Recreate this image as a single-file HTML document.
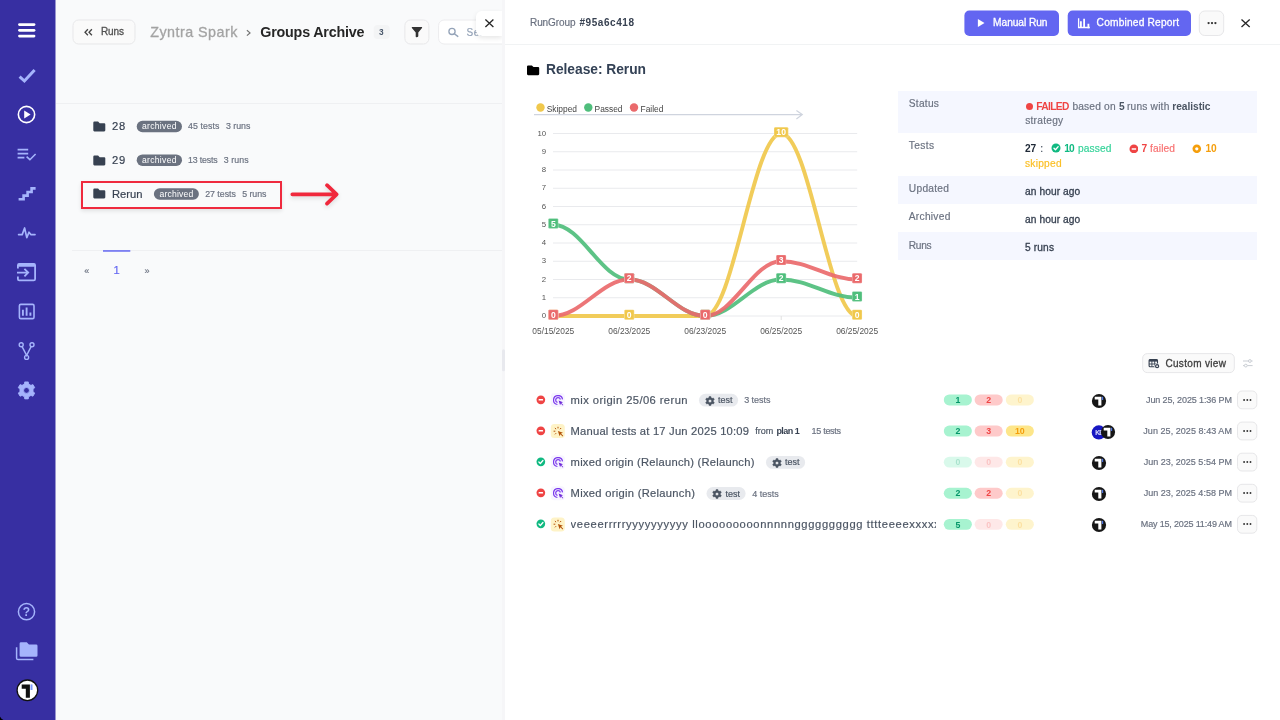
<!DOCTYPE html>
<html lang="en"><head><meta charset="utf-8"><title>Groups Archive</title>
<style>
html,body{margin:0;padding:0}
body{width:1280px;height:720px;overflow:hidden;position:relative;background:#f9fafb;font-family:"Liberation Sans", Arial, sans-serif;-webkit-font-smoothing:antialiased;}
.root{position:absolute;left:0;top:0;width:1280px;height:720px;will-change:transform}
.abs,.t{position:absolute}
.t{white-space:nowrap;line-height:1;margin:0;padding:0;display:block;-webkit-text-stroke:0.18px}
h1.t,h2.t{font-weight:700}
ul,li{margin:0;padding:0;list-style:none}
.sidebar{position:absolute;left:0;top:0;width:55px;height:720px;background:#372fa2}
.hline{position:absolute;height:1px;background:#eff0f2}
.btn{background:#fafafa;border:1px solid #e7e7e9;box-sizing:border-box;display:block}
.pbtn{background:#6366f1;border-radius:5px;display:block}
.hl{border:2px solid #ef2a3e;box-sizing:border-box;box-shadow:0 2px 4px rgba(0,0,0,.10)}
.panel{left:504.8px;top:0;width:776px;height:720px;background:#fff}
</style></head>
<body>
<div class="root">
<nav class="sidebar">
<svg class="abs" style="left:0;top:0" width="56" height="720" viewBox="0 0 56 720">
<rect x="18.1" y="23.2" width="17.3" height="2.7" rx="1.35" fill="#fff"/>
<rect x="18.1" y="29.0" width="17.3" height="2.7" rx="1.35" fill="#fff"/>
<rect x="18.1" y="34.7" width="17.3" height="2.7" rx="1.35" fill="#fff"/>
<path d="M19.6,76.6 L24.4,81 L34.6,70" fill="none" stroke="#a5b4fc" stroke-width="3"/>
<circle cx="26.5" cy="114.5" r="8.15" fill="none" stroke="#fff" stroke-width="1.6"/>
<path d="M24.2,110.4 L24.2,118.6 L30.6,114.5Z" fill="#fff"/>
<path d="M17.6,149.6 h10.6 M17.6,153.6 h10.6 M17.6,157.6 h6.8" stroke="#a5b4fc" stroke-width="1.6" fill="none"/>
<path d="M26.6,156.6 L29.9,159.7 L35.6,154" stroke="#a5b4fc" stroke-width="1.6" fill="none"/>
<path d="M18.6,199.2 h5 v-3.6 h4 v-3.6 h4 v-3.6 h4" stroke="#a5b4fc" stroke-width="2.6" fill="none"/>
<path d="M18.6,234.6 h3.6 l2.4,-6.6 l2.2,9.6 l2.2,-5.4 l1.8,2.4 h4.2" stroke="#a5b4fc" stroke-width="1.7" fill="none" stroke-linejoin="round" stroke-linecap="round"/>
<path d="M17.9,268.4 v-3.2 q0,-1.4 1.4,-1.4 h14.4 q1.4,0 1.4,1.4 v13.8 q0,1.4 -1.4,1.4 h-14.4 q-1.4,0 -1.4,-1.4 v-2.6" stroke="#a5b4fc" stroke-width="1.8" fill="none"/>
<rect x="17.9" y="263.4" width="17.2" height="3.4" rx="1" fill="#a5b4fc"/>
<path d="M17,272.6 h10.6 M24.4,268.8 l3.8,3.8 l-3.8,3.8" stroke="#a5b4fc" stroke-width="1.8" fill="none"/>
<rect x="19.4" y="304.4" width="14.6" height="14.2" rx="1.4" stroke="#a5b4fc" stroke-width="1.6" fill="none"/>
<path d="M22.9,309.8 v6 M26.6,307.4 v8.4 M30.4,312.6 v3.2" stroke="#a5b4fc" stroke-width="1.9" fill="none"/>
<g stroke="#a5b4fc" stroke-width="1.4" fill="none"><circle cx="21.2" cy="344.7" r="2"/><circle cx="32" cy="344.7" r="2"/><circle cx="26.6" cy="357.4" r="2"/><path d="M22.1,346.6 L26.6,355.4 L31.1,346.6"/></g>
<path d="M24.36,384.05 L24.69,381.89 L28.31,381.89 L28.64,384.05 L30.93,385.37 L32.97,384.58 L34.77,387.71 L33.07,389.08 L33.07,391.72 L34.77,393.09 L32.97,396.22 L30.93,395.43 L28.64,396.75 L28.31,398.91 L24.69,398.91 L24.36,396.75 L22.07,395.43 L20.03,396.22 L18.23,393.09 L19.93,391.72 L19.93,389.08 L18.23,387.71 L20.03,384.58 L22.07,385.37Z M23.60,390.40 a2.9,2.9 0 1,0 5.8,0 a2.9,2.9 0 1,0 -5.8,0Z" fill="#a5b4fc" fill-rule="evenodd" stroke="#a5b4fc" stroke-width="0.8" stroke-linejoin="round"/>
<circle cx="26.5" cy="611.7" r="8.1" fill="none" stroke="#a5b4fc" stroke-width="1.5"/>
<text x="26.5" y="616" font-family='"Liberation Sans", Arial, sans-serif' font-size="12" font-weight="700" fill="#a5b4fc" text-anchor="middle">?</text>
<path d="M16.6,647.2 v11 q0,1.4 1.4,1.4 h15.4" stroke="#a5b4fc" stroke-width="1.5" fill="none"/>
<path d="M21.00,642.20 h5.76 l2.20,2.20 h7.14 q1.4,0 1.4,1.4 v9.60 q0,1.4 -1.4,1.4 h-15.10 q-1.4,0 -1.4,-1.4 v-11.80 q0,-1.4 1.4,-1.4z" fill="#a5b4fc"/>
<circle cx="27.4" cy="690.3" r="10.3" fill="#fff" stroke="#111" stroke-width="1.3"/>
<path d="M21.7,684.4 h8.2 v13.4 h-4.1 v-9.1 h-4.1z" fill="#111"/>
<path d="M30.5,684.4 h2 v5.6 h-2z" fill="#7d9bff"/>
</svg>
<div class="abs" style="left:0;top:715px;width:5px;height:5px;background:radial-gradient(circle at 100% 0,rgba(0,0,0,0) 4.7px,#000 5.4px)"></div>
<div class="abs" style="left:55px;top:0;width:1px;height:720px;background:#9a96d0"></div>
</nav>
<main class="left">
<div class="hline" style="left:56px;top:102.6px;width:447px"></div>
<svg class="abs" style="left:70px;top:17px;" width="69" height="31" viewBox="70 17 69 31"><rect x="73.00" y="20.00" width="62.00" height="24.00" rx="5.50" fill="#fafafa" stroke="#e7e7e9" stroke-width="1"/></svg>
<svg class="abs" style="left:82px;top:26px" width="14" height="12" viewBox="82 26 14 12"><path d="M87.9,29.2 L85,32.2 L87.9,35.2 M91.9,29.2 L89,32.2 L91.9,35.2" fill="none" stroke="#444" stroke-width="1.3"/></svg>
<span id="t1" class="t" style="left:101.00px;top:27.00px;font-size:10px;color:#525252;font-weight:400;letter-spacing:-0.120px;-webkit-text-stroke:0.3px;">Runs</span>
<span id="t2" class="t" style="left:150.20px;top:25.00px;font-size:14.3px;color:#a3a3a3;font-weight:400;letter-spacing:0.478px;-webkit-text-stroke:0.3px;">Zyntra Spark</span>
<svg class="abs" style="left:244px;top:28px" width="10" height="10" viewBox="244 28 10 10"><path d="M246.9,30.2 L250,32.9 L246.9,35.6" fill="none" stroke="#737373" stroke-width="1.2"/></svg>
<h1 id="t3" class="t" style="left:260.20px;top:25.00px;font-size:14.3px;color:#262626;font-weight:700;letter-spacing:-0.180px;-webkit-text-stroke:0;">Groups Archive</h1>
<svg class="abs" style="left:371px;top:23px;" width="22" height="20" viewBox="371 23 22 20"><rect x="373.70" y="25.00" width="16.00" height="14.00" rx="4.00" fill="#f3f4f5"/></svg>
<span id="t4" class="t" style="left:379.10px;top:28.00px;font-size:8.3px;color:#475569;font-weight:700;letter-spacing:0.000px;-webkit-text-stroke:0;">3</span>
<svg class="abs" style="left:402px;top:17px;" width="31" height="31" viewBox="402 17 31 31"><rect x="404.90" y="20.00" width="24.00" height="24.00" rx="5.50" fill="#fafafa" stroke="#e7e7e9" stroke-width="1"/></svg>
<svg class="abs" style="left:410px;top:25px" width="14" height="14" viewBox="410 25 14 14"><path d="M412,26.9 h9.9 q0.6,0.4 0.1,1.1 l-3.7,4.6 v3.4 q0,0.6 -0.6,0.9 l-1.2,0.4 q-0.8,0.1 -0.8,-0.7 v-4 l-3.8,-4.6 q-0.4,-0.7 0.1,-1.1z" fill="#333"/></svg>
<div class="abs" style="left:430px;top:10px;width:72px;height:40px;overflow:hidden"><svg class="abs" style="left:6px;top:7px;" width="86" height="31" viewBox="436 17 86 31"><rect x="438.60" y="20.00" width="79.00" height="24.00" rx="5.50" fill="#fff" stroke="#ececee" stroke-width="1"/></svg></div>
<svg class="abs" style="left:446px;top:26px" width="14" height="12" viewBox="446 26 14 12"><circle cx="452" cy="31.4" r="3.1" fill="none" stroke="#94a3b8" stroke-width="1.3"/><path d="M454.3,33.8 L457.8,36.4" stroke="#94a3b8" stroke-width="1.4" stroke-linecap="round"/></svg>
<span id="t5" class="t" style="left:466.50px;top:28.00px;font-size:10px;color:#94a3b8;font-weight:400;letter-spacing:0.000px;letter-spacing:0.5px;">Search</span>
<ul class="list">
<li><svg class="abs" style="left:93px;top:121px" width="13" height="11" viewBox="0 0 13 11"><path d="M1.40,0.60 h3.70 l1.60,1.60 h4.50 q1.1,0 1.1,1.1 v6.00 q0,1.1 -1.1,1.1 h-9.80 q-1.1,0 -1.1,-1.1 v-7.60 q0,-1.1 1.1,-1.1z" fill="#374151"/></svg><span id="t6" class="t" style="left:112.00px;top:121.00px;font-size:11.2px;color:#374151;font-weight:400;letter-spacing:0.747px;">28</span><svg class="abs" style="left:134px;top:118px;" width="52" height="18" viewBox="134 118 52 18"><rect x="136.70" y="120.70" width="45.30" height="11.50" rx="5.75" fill="#6b7280"/></svg><span id="t7" class="t" style="left:142.00px;top:122.00px;font-size:8.6px;color:#fff;font-weight:400;letter-spacing:0.288px;-webkit-text-stroke:0;">archived</span><span id="t8" class="t" style="left:188.00px;top:122.00px;font-size:8.8px;color:#6b7280;font-weight:400;letter-spacing:0.084px;">45 tests</span><span id="t9" class="t" style="left:225.90px;top:122.00px;font-size:8.8px;color:#6b7280;font-weight:400;letter-spacing:0.009px;">3 runs</span></li>
<li><svg class="abs" style="left:93px;top:154.7px" width="13" height="11" viewBox="0 0 13 11"><path d="M1.40,0.60 h3.70 l1.60,1.60 h4.50 q1.1,0 1.1,1.1 v6.00 q0,1.1 -1.1,1.1 h-9.80 q-1.1,0 -1.1,-1.1 v-7.60 q0,-1.1 1.1,-1.1z" fill="#374151"/></svg><span id="t10" class="t" style="left:112.00px;top:155.00px;font-size:11.2px;color:#374151;font-weight:400;letter-spacing:0.747px;">29</span><svg class="abs" style="left:134px;top:152px;" width="52" height="18" viewBox="134 152 52 18"><rect x="136.70" y="154.40" width="45.30" height="11.50" rx="5.75" fill="#6b7280"/></svg><span id="t11" class="t" style="left:142.00px;top:156.00px;font-size:8.6px;color:#fff;font-weight:400;letter-spacing:0.288px;-webkit-text-stroke:0;">archived</span><span id="t12" class="t" style="left:188.00px;top:156.00px;font-size:8.8px;color:#6b7280;font-weight:400;letter-spacing:-0.173px;">13 tests</span><span id="t13" class="t" style="left:223.80px;top:156.00px;font-size:8.8px;color:#6b7280;font-weight:400;letter-spacing:0.069px;">3 runs</span></li>
<li><div class="abs hl" style="left:81px;top:181px;width:201px;height:28px"></div><svg class="abs" style="left:93px;top:188.4px" width="13" height="11" viewBox="0 0 13 11"><path d="M1.40,0.60 h3.70 l1.60,1.60 h4.50 q1.1,0 1.1,1.1 v6.00 q0,1.1 -1.1,1.1 h-9.80 q-1.1,0 -1.1,-1.1 v-7.60 q0,-1.1 1.1,-1.1z" fill="#374151"/></svg><span id="t14" class="t" style="left:112.00px;top:189.00px;font-size:11.2px;color:#374151;font-weight:400;letter-spacing:-0.021px;">Rerun</span><svg class="abs" style="left:151px;top:186px;" width="51" height="18" viewBox="151 186 51 18"><rect x="153.90" y="188.20" width="45.00" height="11.50" rx="5.75" fill="#6b7280"/></svg><span id="t15" class="t" style="left:159.60px;top:190.00px;font-size:8.6px;color:#fff;font-weight:400;letter-spacing:0.174px;-webkit-text-stroke:0;">archived</span><span id="t16" class="t" style="left:205.20px;top:190.00px;font-size:8.8px;color:#6b7280;font-weight:400;letter-spacing:-0.016px;">27 tests</span><span id="t17" class="t" style="left:242.30px;top:190.00px;font-size:8.8px;color:#6b7280;font-weight:400;letter-spacing:-0.071px;">5 runs</span></li>
</ul>
<svg class="abs" style="left:285px;top:178px;filter:drop-shadow(0 2px 2px rgba(0,0,0,.12))" width="60" height="32" viewBox="285 178 60 32"><path d="M292.3,194.3 H336.5 M327,185.2 L336.6,194.3 L327,203.6" fill="none" stroke="#f0283c" stroke-width="3.7" stroke-linecap="round" stroke-linejoin="round"/></svg>
<div class="hline" style="left:72px;top:250.2px;width:431px"></div>
<svg class="abs" style="left:101px;top:248px;" width="34" height="8" viewBox="101 248 34 8"><rect x="103.00" y="250.20" width="27.30" height="1.50" rx="0.00" fill="#6366f1"/></svg>
<span id="t18" class="t" style="left:84.20px;top:267.00px;font-size:9px;color:#6b7280;font-weight:400;letter-spacing:0.000px;">«</span><span id="t19" class="t" style="left:113.60px;top:265.00px;font-size:11.2px;color:#6366f1;font-weight:400;letter-spacing:0.000px;">1</span><span id="t20" class="t" style="left:144.60px;top:267.00px;font-size:9px;color:#6b7280;font-weight:400;letter-spacing:0.000px;">»</span>
<div class="abs" style="left:476.2px;top:10.6px;width:25.8px;height:25.3px;border-radius:6px 0 0 6px;background:#fff;box-shadow:0 2px 5px rgba(0,0,0,.10)"></div>
<svg class="abs" style="left:483px;top:17px" width="13" height="13" viewBox="483 17 13 13"><path d="M485.4,19.5 L493.4,26.9 M493.4,19.5 L485.4,26.9" stroke="#262626" stroke-width="1.3"/></svg>
</main>
<section class="right">
<div class="abs panel"></div>
<div class="abs" style="left:501.8px;top:0;width:3.2px;height:720px;background:#f6f6f8"></div>
<svg class="abs" style="left:500px;top:347px;" width="9" height="28" viewBox="500 347 9 28"><rect x="502.00" y="349.20" width="3.00" height="22.00" rx="1.50" fill="#e8e9ee"/></svg>
<div class="hline" style="left:505px;top:43.6px;width:775px;background:#f1f3f4"></div>
<span id="t21" class="t" style="left:530.00px;top:18.00px;font-size:10px;color:#6b7280;font-weight:400;letter-spacing:-0.092px;">RunGroup</span><span id="t22" class="t" style="left:579.50px;top:18.00px;font-size:10px;color:#374151;font-weight:700;letter-spacing:0.555px;-webkit-text-stroke:0;">#95a6c418</span>
<svg class="abs" style="left:962px;top:8px;" width="101" height="32" viewBox="962 8 101 32"><rect x="964.40" y="10.60" width="94.60" height="25.40" rx="5.00" fill="#6366f1"/></svg>
<svg class="abs" style="left:976px;top:18px" width="10" height="10" viewBox="976 18 10 10"><path d="M977.9,19 L984.5,23 L977.9,27Z" fill="#fff"/></svg>
<span id="t23" class="t" style="left:993.10px;top:18.00px;font-size:10.2px;color:#fff;font-weight:400;letter-spacing:-0.060px;-webkit-text-stroke:0.3px;">Manual Run</span>
<svg class="abs" style="left:1065px;top:8px;" width="130" height="32" viewBox="1065 8 130 32"><rect x="1067.70" y="10.60" width="123.30" height="25.40" rx="5.00" fill="#6366f1"/></svg>
<svg class="abs" style="left:1077px;top:17px" width="14" height="12" viewBox="1077 17 14 12"><path d="M1078.6,18.2 v9.3 h11.2" stroke="#fff" stroke-width="1.3" fill="none"/><path d="M1080.9,21.3 v5.6 M1084.1,18.8 v8.1 M1088.4,23.8 v4.4" stroke="#fff" stroke-width="1.8" fill="none"/></svg>
<span id="t24" class="t" style="left:1096.60px;top:18.00px;font-size:10.2px;color:#fff;font-weight:400;letter-spacing:0.183px;-webkit-text-stroke:0.3px;">Combined Report</span>
<svg class="abs" style="left:1196px;top:8px;" width="32" height="32" viewBox="1196 8 32 32"><rect x="1199.30" y="11.00" width="24.40" height="24.50" rx="5.50" fill="#fafafa" stroke="#e7e7e9" stroke-width="1"/></svg>
<svg class="abs" style="left:1206px;top:21px" width="12" height="4" viewBox="1206 21 12 4"><circle cx="1208.6" cy="23.1" r="1.15" fill="#333"/><circle cx="1212" cy="23.1" r="1.15" fill="#333"/><circle cx="1215.4" cy="23.1" r="1.15" fill="#333"/></svg>
<svg class="abs" style="left:1239px;top:17px" width="13" height="13" viewBox="1239 17 13 13"><path d="M1241.5,19.5 L1249.7,27.1 M1249.7,19.5 L1241.5,27.1" stroke="#262626" stroke-width="1.3"/></svg>
<svg class="abs" style="left:526px;top:64px" width="14" height="12" viewBox="0 0 14 12"><path d="M2.10,1.40 h3.78 l1.60,1.60 h4.62 q1.1,0 1.1,1.1 v6.00 q0,1.1 -1.1,1.1 h-10.00 q-1.1,0 -1.1,-1.1 v-7.60 q0,-1.1 1.1,-1.1z" fill="#000"/></svg>
<h2 id="t25" class="t" style="left:546.00px;top:63.00px;font-size:13.8px;color:#334155;font-weight:700;letter-spacing:-0.035px;-webkit-text-stroke:0;">Release: Rerun</h2>
<div class="abs" style="left:898px;top:91.3px;width:359.2px;height:41.8px;background:#f5f7ff"></div>
<div class="abs" style="left:898px;top:175.6px;width:359.2px;height:28.2px;background:#f5f7ff"></div>
<div class="abs" style="left:898px;top:232px;width:359.2px;height:28.1px;background:#f5f7ff"></div>
<span id="t26" class="t" style="left:908.80px;top:99.00px;font-size:10.2px;color:#6b7280;font-weight:400;letter-spacing:0.242px;">Status</span>
<span class="abs" style="left:1025.6px;top:102.6px;width:7.6px;height:7.6px;border-radius:50%;background:#ef4444"></span>
<span id="t27" class="t" style="left:1036.20px;top:102.00px;font-size:10.2px;color:#ef4444;font-weight:700;letter-spacing:-0.607px;-webkit-text-stroke:0;">FAILED</span><span id="t28" class="t" style="left:1072.40px;top:102.00px;font-size:10.2px;color:#6b7280;font-weight:400;letter-spacing:0.183px;">based on</span><span id="t29" class="t" style="left:1118.90px;top:102.00px;font-size:10.2px;color:#4b5563;font-weight:700;letter-spacing:0.000px;-webkit-text-stroke:0;">5</span><span id="t30" class="t" style="left:1127.00px;top:102.00px;font-size:10.2px;color:#6b7280;font-weight:400;letter-spacing:0.192px;">runs with</span><span id="t31" class="t" style="left:1172.30px;top:102.00px;font-size:10.2px;color:#4b5563;font-weight:700;letter-spacing:-0.039px;-webkit-text-stroke:0;">realistic</span><span id="t32" class="t" style="left:1025.20px;top:116.00px;font-size:10.2px;color:#6b7280;font-weight:400;letter-spacing:0.250px;">strategy</span>
<span id="t33" class="t" style="left:908.80px;top:141.00px;font-size:10.2px;color:#6b7280;font-weight:400;letter-spacing:0.355px;">Tests</span>
<span id="t34" class="t" style="left:1025.00px;top:144.00px;font-size:10.2px;color:#1f2937;font-weight:700;letter-spacing:-0.044px;-webkit-text-stroke:0;">27</span><span id="t35" class="t" style="left:1040.30px;top:144.00px;font-size:10.2px;color:#4b5563;font-weight:400;letter-spacing:0.000px;">:</span>
<svg class="abs" style="left:1050.50px;top:143.40px" width="10.00" height="10.00" viewBox="-5.0 -5.0 10.0 10.0"><circle r="4.5" fill="#10b981"/><path d="M-2.02,0.23 L-0.54,1.71 L2.16,-1.35" stroke="#fff" stroke-width="1.35" fill="none" stroke-linecap="round" stroke-linejoin="round"/></svg><span id="t36" class="t" style="left:1064.30px;top:144.00px;font-size:10.2px;color:#10b981;font-weight:700;letter-spacing:-0.844px;-webkit-text-stroke:0;">10</span><span id="t37" class="t" style="left:1077.90px;top:144.00px;font-size:10.2px;color:#34d399;font-weight:400;letter-spacing:0.128px;">passed</span>
<svg class="abs" style="left:1128.50px;top:143.50px" width="9.80" height="9.80" viewBox="-4.9 -4.9 9.8 9.8"><circle r="4.4" fill="#ef4444"/><rect x="-2.29" y="-0.75" width="4.58" height="1.50" rx="0.44" fill="#fff"/></svg><span id="t38" class="t" style="left:1141.50px;top:144.00px;font-size:10.2px;color:#ef4444;font-weight:700;letter-spacing:0.000px;-webkit-text-stroke:0;">7</span><span id="t39" class="t" style="left:1150.00px;top:144.00px;font-size:10.2px;color:#f87171;font-weight:400;letter-spacing:0.128px;">failed</span>
<svg class="abs" style="left:1192.40px;top:143.60px" width="9.60" height="9.60" viewBox="-4.8 -4.8 9.6 9.6"><circle r="4.3" fill="#f59e0b"/><circle r="1.63" fill="#fff"/></svg><span id="t40" class="t" style="left:1205.50px;top:144.00px;font-size:10.2px;color:#f59e0b;font-weight:700;letter-spacing:-0.244px;-webkit-text-stroke:0;">10</span><span id="t41" class="t" style="left:1025.00px;top:159.00px;font-size:10.2px;color:#fbbf24;font-weight:400;letter-spacing:0.246px;">skipped</span>
<span id="t42" class="t" style="left:908.80px;top:184.00px;font-size:10.2px;color:#6b7280;font-weight:400;letter-spacing:0.278px;">Updated</span><span id="t43" class="t" style="left:1025.00px;top:187.00px;font-size:10.2px;color:#374151;font-weight:400;letter-spacing:0.091px;-webkit-text-stroke:0.3px;">an hour ago</span>
<span id="t44" class="t" style="left:908.80px;top:212.00px;font-size:10.2px;color:#6b7280;font-weight:400;letter-spacing:0.266px;">Archived</span><span id="t45" class="t" style="left:1025.00px;top:215.00px;font-size:10.2px;color:#374151;font-weight:400;letter-spacing:0.091px;-webkit-text-stroke:0.3px;">an hour ago</span>
<span id="t46" class="t" style="left:908.80px;top:241.00px;font-size:10.2px;color:#6b7280;font-weight:400;letter-spacing:-0.332px;">Runs</span><span id="t47" class="t" style="left:1025.00px;top:243.00px;font-size:10.2px;color:#374151;font-weight:400;letter-spacing:0.134px;-webkit-text-stroke:0.3px;">5 runs</span>
<svg class="abs chart" style="left:520px;top:95px" width="375" height="250" viewBox="520 95 375 250" font-family='"Liberation Sans", Arial, sans-serif'>
<circle cx="540.5" cy="107.5" r="4.2" fill="#f0c84c"/><text x="546.7" y="111.8" font-size="8.4" fill="#444">Skipped</text>
<circle cx="588.3" cy="107.5" r="4.2" fill="#4fbe7c"/><text x="594.6" y="111.8" font-size="8.4" fill="#444">Passed</text>
<circle cx="634" cy="107.5" r="4.2" fill="#ea6a6c"/><text x="640.6" y="111.8" font-size="8.4" fill="#444">Failed</text>
<path d="M534,114.6 H802 M796.4,110.4 L802.3,114.6 L796.4,119" fill="none" stroke="#cfd4de" stroke-width="1.2"/>
<line x1="553" x2="857.2" y1="316.00" y2="316.00" stroke="#e9eaed" stroke-width="1"/>
<text x="546.2" y="318.00" font-size="7.8" fill="#555" text-anchor="end">0</text>
<line x1="553" x2="857.2" y1="297.75" y2="297.75" stroke="#e9eaed" stroke-width="1"/>
<text x="546.2" y="299.75" font-size="7.8" fill="#555" text-anchor="end">1</text>
<line x1="553" x2="857.2" y1="279.50" y2="279.50" stroke="#e9eaed" stroke-width="1"/>
<text x="546.2" y="281.50" font-size="7.8" fill="#555" text-anchor="end">2</text>
<line x1="553" x2="857.2" y1="261.25" y2="261.25" stroke="#e9eaed" stroke-width="1"/>
<text x="546.2" y="263.25" font-size="7.8" fill="#555" text-anchor="end">3</text>
<line x1="553" x2="857.2" y1="243.00" y2="243.00" stroke="#e9eaed" stroke-width="1"/>
<text x="546.2" y="245.00" font-size="7.8" fill="#555" text-anchor="end">4</text>
<line x1="553" x2="857.2" y1="224.75" y2="224.75" stroke="#e9eaed" stroke-width="1"/>
<text x="546.2" y="226.75" font-size="7.8" fill="#555" text-anchor="end">5</text>
<line x1="553" x2="857.2" y1="206.50" y2="206.50" stroke="#e9eaed" stroke-width="1"/>
<text x="546.2" y="208.50" font-size="7.8" fill="#555" text-anchor="end">6</text>
<line x1="553" x2="857.2" y1="188.25" y2="188.25" stroke="#e9eaed" stroke-width="1"/>
<text x="546.2" y="190.25" font-size="7.8" fill="#555" text-anchor="end">7</text>
<line x1="553" x2="857.2" y1="170.00" y2="170.00" stroke="#e9eaed" stroke-width="1"/>
<text x="546.2" y="172.00" font-size="7.8" fill="#555" text-anchor="end">8</text>
<line x1="553" x2="857.2" y1="151.75" y2="151.75" stroke="#e9eaed" stroke-width="1"/>
<text x="546.2" y="153.75" font-size="7.8" fill="#555" text-anchor="end">9</text>
<line x1="553" x2="857.2" y1="133.50" y2="133.50" stroke="#e9eaed" stroke-width="1"/>
<text x="546.2" y="135.50" font-size="7.8" fill="#555" text-anchor="end">10</text>
<line x1="781.2" x2="781.2" y1="316" y2="320" stroke="#e0e0e0" stroke-width="1"/>
<text x="553.30" y="333.9" font-size="8.4" fill="#555" text-anchor="middle">05/15/2025</text>
<text x="629.25" y="333.9" font-size="8.4" fill="#555" text-anchor="middle">06/23/2025</text>
<text x="705.20" y="333.9" font-size="8.4" fill="#555" text-anchor="middle">06/23/2025</text>
<text x="781.15" y="333.9" font-size="8.4" fill="#555" text-anchor="middle">06/25/2025</text>
<text x="857.10" y="333.9" font-size="8.4" fill="#555" text-anchor="middle">06/25/2025</text>
<path d="M553.30,316.00 C581.43,316.00 601.12,316.00 629.25,316.00 C657.38,316.00 677.07,316.00 705.20,316.00 C733.33,316.00 753.02,133.50 781.15,133.50 C809.28,133.50 828.97,316.00 857.10,316.00" fill="none" stroke="#f0c84c" stroke-width="3.9" stroke-linecap="butt" opacity="0.92"/>
<path d="M553.30,224.75 C581.43,224.75 601.12,279.50 629.25,279.50 C657.38,279.50 677.07,316.00 705.20,316.00 C733.33,316.00 753.02,279.50 781.15,279.50 C809.28,279.50 828.97,297.75 857.10,297.75" fill="none" stroke="#4fbe7c" stroke-width="3.9" stroke-linecap="butt" opacity="0.92"/>
<path d="M553.30,316.00 C581.43,316.00 601.12,279.50 629.25,279.50 C657.38,279.50 677.07,316.00 705.20,316.00 C733.33,316.00 753.02,261.25 781.15,261.25 C809.28,261.25 828.97,279.50 857.10,279.50" fill="none" stroke="#ea6a6c" stroke-width="3.9" stroke-linecap="butt" opacity="0.92"/>
<rect x="548.35" y="309.65" width="9.9" height="10.1" rx="1.2" fill="#fff"/><rect x="548.35" y="309.65" width="9.9" height="10.1" rx="1.2" fill="#f0c84c" fill-opacity="0.8"/><rect x="549.05" y="310.35" width="8.5" height="8.7" rx="0.8" fill="#f0c84c"/><text x="553.30" y="317.80" font-size="8.6" font-weight="700" fill="#fff" text-anchor="middle">0</text>
<rect x="624.30" y="309.65" width="9.9" height="10.1" rx="1.2" fill="#fff"/><rect x="624.30" y="309.65" width="9.9" height="10.1" rx="1.2" fill="#f0c84c" fill-opacity="0.8"/><rect x="625.00" y="310.35" width="8.5" height="8.7" rx="0.8" fill="#f0c84c"/><text x="629.25" y="317.80" font-size="8.6" font-weight="700" fill="#fff" text-anchor="middle">0</text>
<rect x="700.25" y="309.65" width="9.9" height="10.1" rx="1.2" fill="#fff"/><rect x="700.25" y="309.65" width="9.9" height="10.1" rx="1.2" fill="#f0c84c" fill-opacity="0.8"/><rect x="700.95" y="310.35" width="8.5" height="8.7" rx="0.8" fill="#f0c84c"/><text x="705.20" y="317.80" font-size="8.6" font-weight="700" fill="#fff" text-anchor="middle">0</text>
<rect x="774.00" y="127.15" width="14.3" height="10.1" rx="1.2" fill="#fff"/><rect x="774.00" y="127.15" width="14.3" height="10.1" rx="1.2" fill="#f0c84c" fill-opacity="0.8"/><rect x="774.70" y="127.85" width="12.9" height="8.7" rx="0.8" fill="#f0c84c"/><text x="781.15" y="135.30" font-size="8.6" font-weight="700" fill="#fff" text-anchor="middle">10</text>
<rect x="852.15" y="309.65" width="9.9" height="10.1" rx="1.2" fill="#fff"/><rect x="852.15" y="309.65" width="9.9" height="10.1" rx="1.2" fill="#f0c84c" fill-opacity="0.8"/><rect x="852.85" y="310.35" width="8.5" height="8.7" rx="0.8" fill="#f0c84c"/><text x="857.10" y="317.80" font-size="8.6" font-weight="700" fill="#fff" text-anchor="middle">0</text>
<rect x="548.35" y="218.40" width="9.9" height="10.1" rx="1.2" fill="#fff"/><rect x="548.35" y="218.40" width="9.9" height="10.1" rx="1.2" fill="#4fbe7c" fill-opacity="0.8"/><rect x="549.05" y="219.10" width="8.5" height="8.7" rx="0.8" fill="#4fbe7c"/><text x="553.30" y="226.55" font-size="8.6" font-weight="700" fill="#fff" text-anchor="middle">5</text>
<rect x="624.30" y="273.15" width="9.9" height="10.1" rx="1.2" fill="#fff"/><rect x="624.30" y="273.15" width="9.9" height="10.1" rx="1.2" fill="#4fbe7c" fill-opacity="0.8"/><rect x="625.00" y="273.85" width="8.5" height="8.7" rx="0.8" fill="#4fbe7c"/><text x="629.25" y="281.30" font-size="8.6" font-weight="700" fill="#fff" text-anchor="middle">2</text>
<rect x="700.25" y="309.65" width="9.9" height="10.1" rx="1.2" fill="#fff"/><rect x="700.25" y="309.65" width="9.9" height="10.1" rx="1.2" fill="#4fbe7c" fill-opacity="0.8"/><rect x="700.95" y="310.35" width="8.5" height="8.7" rx="0.8" fill="#4fbe7c"/><text x="705.20" y="317.80" font-size="8.6" font-weight="700" fill="#fff" text-anchor="middle">0</text>
<rect x="776.20" y="273.15" width="9.9" height="10.1" rx="1.2" fill="#fff"/><rect x="776.20" y="273.15" width="9.9" height="10.1" rx="1.2" fill="#4fbe7c" fill-opacity="0.8"/><rect x="776.90" y="273.85" width="8.5" height="8.7" rx="0.8" fill="#4fbe7c"/><text x="781.15" y="281.30" font-size="8.6" font-weight="700" fill="#fff" text-anchor="middle">2</text>
<rect x="852.15" y="291.40" width="9.9" height="10.1" rx="1.2" fill="#fff"/><rect x="852.15" y="291.40" width="9.9" height="10.1" rx="1.2" fill="#4fbe7c" fill-opacity="0.8"/><rect x="852.85" y="292.10" width="8.5" height="8.7" rx="0.8" fill="#4fbe7c"/><text x="857.10" y="299.55" font-size="8.6" font-weight="700" fill="#fff" text-anchor="middle">1</text>
<rect x="548.35" y="309.65" width="9.9" height="10.1" rx="1.2" fill="#fff"/><rect x="548.35" y="309.65" width="9.9" height="10.1" rx="1.2" fill="#ea6a6c" fill-opacity="0.8"/><rect x="549.05" y="310.35" width="8.5" height="8.7" rx="0.8" fill="#ea6a6c"/><text x="553.30" y="317.80" font-size="8.6" font-weight="700" fill="#fff" text-anchor="middle">0</text>
<rect x="624.30" y="273.15" width="9.9" height="10.1" rx="1.2" fill="#fff"/><rect x="624.30" y="273.15" width="9.9" height="10.1" rx="1.2" fill="#ea6a6c" fill-opacity="0.8"/><rect x="625.00" y="273.85" width="8.5" height="8.7" rx="0.8" fill="#ea6a6c"/><text x="629.25" y="281.30" font-size="8.6" font-weight="700" fill="#fff" text-anchor="middle">2</text>
<rect x="700.25" y="309.65" width="9.9" height="10.1" rx="1.2" fill="#fff"/><rect x="700.25" y="309.65" width="9.9" height="10.1" rx="1.2" fill="#ea6a6c" fill-opacity="0.8"/><rect x="700.95" y="310.35" width="8.5" height="8.7" rx="0.8" fill="#ea6a6c"/><text x="705.20" y="317.80" font-size="8.6" font-weight="700" fill="#fff" text-anchor="middle">0</text>
<rect x="776.20" y="254.90" width="9.9" height="10.1" rx="1.2" fill="#fff"/><rect x="776.20" y="254.90" width="9.9" height="10.1" rx="1.2" fill="#ea6a6c" fill-opacity="0.8"/><rect x="776.90" y="255.60" width="8.5" height="8.7" rx="0.8" fill="#ea6a6c"/><text x="781.15" y="263.05" font-size="8.6" font-weight="700" fill="#fff" text-anchor="middle">3</text>
<rect x="852.15" y="273.15" width="9.9" height="10.1" rx="1.2" fill="#fff"/><rect x="852.15" y="273.15" width="9.9" height="10.1" rx="1.2" fill="#ea6a6c" fill-opacity="0.8"/><rect x="852.85" y="273.85" width="8.5" height="8.7" rx="0.8" fill="#ea6a6c"/><text x="857.10" y="281.30" font-size="8.6" font-weight="700" fill="#fff" text-anchor="middle">2</text>
</svg>
<svg class="abs" style="left:1140px;top:351px;" width="99" height="26" viewBox="1140 351 99 26"><rect x="1142.70" y="353.60" width="91.60" height="19.00" rx="4.50" fill="#fafafa" stroke="#e7e7e9" stroke-width="1"/></svg>
<svg class="abs" style="left:1148px;top:358px" width="12" height="11" viewBox="1148 358 12 11"><rect x="1149.1" y="359.5" width="8.4" height="7.2" rx="1" fill="none" stroke="#374151" stroke-width="1.1"/><rect x="1149.1" y="359.5" width="8.4" height="2.1" fill="#374151"/><path d="M1151.9,361 v5.6 M1154.7,361 v5.6 M1149,364 h8.4" stroke="#374151" stroke-width="0.9"/><circle cx="1157.1" cy="366.2" r="2.7" fill="#fafafa"/><circle cx="1157.1" cy="366.2" r="1.5" fill="none" stroke="#374151" stroke-width="1.3"/></svg>
<span id="t48" class="t" style="left:1165.40px;top:359.00px;font-size:10px;color:#404040;font-weight:400;letter-spacing:0.335px;-webkit-text-stroke:0.3px;">Custom view</span>
<svg class="abs" style="left:1242px;top:358px" width="12" height="11" viewBox="1242 358 12 11"><g stroke="#c3c7ce" stroke-width="0.9" fill="none"><path d="M1243,361 h5.4 M1251.4,361 h1.2 M1243,365.6 h1.2 M1247.4,365.6 h5.2"/><circle cx="1249.9" cy="361" r="1.4"/><circle cx="1245.8" cy="365.6" r="1.4"/></g></svg>
<ul class="runs">
<li>
<svg class="abs" style="left:535.95px;top:395.05px" width="9.70" height="9.70" viewBox="-4.85 -4.85 9.7 9.7"><circle r="4.35" fill="#ef4444"/><rect x="-2.26" y="-0.74" width="4.52" height="1.48" rx="0.43" fill="#fff"/></svg>
<svg class="abs" style="left:548px;top:391px;" width="20" height="20" viewBox="548 391 20 20"><rect x="550.80" y="393.00" width="14.00" height="14.00" rx="3.50" fill="#f7f5ff"/></svg><svg class="abs" style="left:552.8px;top:395.00px" width="11" height="11" viewBox="0 0 11 11"><g fill="none" stroke="#7c3aed" stroke-width="1.25"><path d="M9.5,4.4 A4.5,4.5 0 1,0 4.4,9.5"/><path d="M7.4,4.5 A2.4,2.4 0 1,0 4.5,7.4"/></g><path d="M5.6,5.6 L10,7.2 L8.3,8 L10.3,10 L9.8,10.5 L7.8,8.5 L7.1,10.2Z" fill="#6d28d9"/></svg>
<span id="t49" class="t" style="left:570.60px;top:395.00px;font-size:11.2px;color:#4b5563;font-weight:400;letter-spacing:0.414px;">mix origin 25/06 rerun</span>
<svg class="abs" style="left:697px;top:391px;" width="46" height="19" viewBox="697 391 46 19"><rect x="699.00" y="393.80" width="39.10" height="12.80" rx="6.40" fill="#e8eaee"/></svg><svg class="abs" style="left:704.90px;top:395.60px" width="10" height="10" viewBox="-5 -5 10 10"><path d="M-1.12,-3.32 L-0.96,-4.50 L0.96,-4.50 L1.12,-3.32 L2.31,-2.63 L3.42,-3.08 L4.37,-1.42 L3.43,-0.69 L3.43,0.69 L4.37,1.42 L3.42,3.08 L2.31,2.63 L1.12,3.32 L0.96,4.50 L-0.96,4.50 L-1.12,3.32 L-2.31,2.63 L-3.42,3.08 L-4.37,1.42 L-3.43,0.69 L-3.43,-0.69 L-4.37,-1.42 L-3.42,-3.08 L-2.31,-2.63Z M-1.60,0.00 a1.6,1.6 0 1,0 3.2,0 a1.6,1.6 0 1,0 -3.2,0Z" fill="#4b5563" fill-rule="evenodd" stroke="#4b5563" stroke-width="0.4" stroke-linejoin="round"/></svg><span id="t50" class="t" style="left:718.10px;top:396.00px;font-size:9px;color:#4b5563;font-weight:400;letter-spacing:-0.039px;">test</span>
<span id="t51" class="t" style="left:744.20px;top:396.00px;font-size:9px;color:#6b7280;font-weight:400;letter-spacing:-0.036px;">3 tests</span>
<svg class="abs" style="left:941px;top:392px;" width="35" height="17" viewBox="941 392 35 17"><rect x="943.80" y="394.50" width="28.10" height="10.90" rx="5.45" fill="#a7f3d0"/></svg><span id="t52" class="t" style="left:955.40px;top:396.00px;font-size:8.8px;color:#059669;font-weight:700;letter-spacing:0.000px;-webkit-text-stroke:0;">1</span><svg class="abs" style="left:972px;top:392px;" width="35" height="17" viewBox="972 392 35 17"><rect x="974.60" y="394.50" width="28.10" height="10.90" rx="5.45" fill="#fecaca"/></svg><span id="t53" class="t" style="left:986.20px;top:396.00px;font-size:8.8px;color:#ef4444;font-weight:700;letter-spacing:0.000px;-webkit-text-stroke:0;">2</span><svg class="abs" style="left:1003px;top:392px;opacity:0.42;" width="35" height="17" viewBox="1003 392 35 17"><rect x="1005.80" y="394.50" width="28.10" height="10.90" rx="5.45" fill="#fde68a"/></svg><span id="t54" class="t" style="left:1017.40px;top:396.00px;font-size:8.8px;color:#f59e0b;font-weight:700;letter-spacing:0.000px;-webkit-text-stroke:0;opacity:.22;">0</span>
<svg class="abs" style="left:1091.00px;top:392.70px" width="16" height="16" viewBox="-8 -8 16 16"><circle r="7.1" fill="#161616"/><path d="M-4.3,-4.2 h6.7 v8.8 h-3.1 v-6 h-3.6z" fill="#fff"/><path d="M2.9,-4.2 h1.3 v3.2 h-1.3z" fill="#4f74e0"/></svg>
<span id="t55" class="t" style="left:1146.00px;top:396.00px;font-size:9px;color:#6b7280;font-weight:400;letter-spacing:-0.114px;">Jun 25, 2025 1:36 PM</span>
<svg class="abs" style="left:1235px;top:388px;" width="27" height="25" viewBox="1235 388 27 25"><rect x="1237.50" y="391.00" width="19.30" height="17.80" rx="4.50" fill="#fafafa" stroke="#e7e7e9" stroke-width="1"/></svg><svg class="abs" style="left:1242px;top:398.00px" width="11" height="4" viewBox="0 0 11 4"><circle cx="2.1" cy="2" r="0.95" fill="#333"/><circle cx="5.3" cy="2" r="0.95" fill="#333"/><circle cx="8.5" cy="2" r="0.95" fill="#333"/></svg>
</li>
<li>
<svg class="abs" style="left:535.95px;top:426.15px" width="9.70" height="9.70" viewBox="-4.85 -4.85 9.7 9.7"><circle r="4.35" fill="#ef4444"/><rect x="-2.26" y="-0.74" width="4.52" height="1.48" rx="0.43" fill="#fff"/></svg>
<svg class="abs" style="left:548px;top:422px;" width="20" height="20" viewBox="548 422 20 20"><rect x="550.80" y="424.10" width="14.00" height="14.00" rx="3.50" fill="#fef3c7"/></svg><svg class="abs" style="left:552.8px;top:426.10px" width="11" height="11" viewBox="0 0 11 11"><path d="M4.9,4.9 L10,6.7 L8,7.6 L10.2,9.8 L9.6,10.4 L7.4,8.2 L6.6,10.2Z" fill="#b45309"/><g stroke="#b45309" stroke-width="1" stroke-linecap="butt"><path d="M5,0.8 v1.6 M1.9,2 l1.2,1.2 M0.6,5.2 h1.7 M2,8.3 l1.1,-1.1 M8.1,2 l-1.1,1.2"/></g></svg>
<span id="t56" class="t" style="left:570.60px;top:426.00px;font-size:11.2px;color:#4b5563;font-weight:400;letter-spacing:0.210px;">Manual tests at 17 Jun 2025 10:09</span>
<span id="t57" class="t" style="left:755.30px;top:427.00px;font-size:9px;color:#4b5563;font-weight:400;letter-spacing:0.000px;">from</span><span id="t58" class="t" style="left:776.40px;top:427.00px;font-size:9px;color:#374151;font-weight:700;letter-spacing:-0.543px;-webkit-text-stroke:0;">plan 1</span>
<span id="t59" class="t" style="left:811.60px;top:427.00px;font-size:9px;color:#6b7280;font-weight:400;letter-spacing:-0.304px;">15 tests</span>
<svg class="abs" style="left:941px;top:423px;" width="35" height="17" viewBox="941 423 35 17"><rect x="943.80" y="425.60" width="28.10" height="10.90" rx="5.45" fill="#a7f3d0"/></svg><span id="t60" class="t" style="left:955.40px;top:427.00px;font-size:8.8px;color:#059669;font-weight:700;letter-spacing:0.000px;-webkit-text-stroke:0;">2</span><svg class="abs" style="left:972px;top:423px;" width="35" height="17" viewBox="972 423 35 17"><rect x="974.60" y="425.60" width="28.10" height="10.90" rx="5.45" fill="#fecaca"/></svg><span id="t61" class="t" style="left:986.20px;top:427.00px;font-size:8.8px;color:#ef4444;font-weight:700;letter-spacing:0.000px;-webkit-text-stroke:0;">3</span><svg class="abs" style="left:1003px;top:423px;" width="35" height="17" viewBox="1003 423 35 17"><rect x="1005.80" y="425.60" width="28.10" height="10.90" rx="5.45" fill="#fde68a"/></svg><span id="t62" class="t" style="left:1014.95px;top:427.00px;font-size:8.8px;color:#f59e0b;font-weight:700;letter-spacing:0.003px;-webkit-text-stroke:0;">10</span>
<svg class="abs" style="left:1089px;top:423px;" width="21" height="21" viewBox="1089 423 21 21"><rect x="1091.70" y="425.30" width="14.20" height="14.20" rx="7.10" fill="#1616c2"/></svg><span id="t63" class="t" style="left:1095.20px;top:429.00px;font-size:7px;color:#e5e7ff;font-weight:400;letter-spacing:-0.544px;">KE</span>
<svg class="abs" style="left:1100.20px;top:424.30px" width="16" height="16" viewBox="-8 -8 16 16"><circle r="7.1" fill="#161616"/><path d="M-4.3,-4.2 h6.7 v8.8 h-3.1 v-6 h-3.6z" fill="#fff"/><path d="M2.9,-4.2 h1.3 v3.2 h-1.3z" fill="#4f74e0"/></svg>
<span id="t64" class="t" style="left:1143.30px;top:427.00px;font-size:9px;color:#6b7280;font-weight:400;letter-spacing:0.054px;">Jun 25, 2025 8:43 AM</span>
<svg class="abs" style="left:1235px;top:419px;" width="27" height="25" viewBox="1235 419 27 25"><rect x="1237.50" y="422.10" width="19.30" height="17.80" rx="4.50" fill="#fafafa" stroke="#e7e7e9" stroke-width="1"/></svg><svg class="abs" style="left:1242px;top:429.10px" width="11" height="4" viewBox="0 0 11 4"><circle cx="2.1" cy="2" r="0.95" fill="#333"/><circle cx="5.3" cy="2" r="0.95" fill="#333"/><circle cx="8.5" cy="2" r="0.95" fill="#333"/></svg>
</li>
<li>
<svg class="abs" style="left:535.95px;top:457.25px" width="9.70" height="9.70" viewBox="-4.85 -4.85 9.7 9.7"><circle r="4.35" fill="#10b981"/><path d="M-1.96,0.22 L-0.52,1.65 L2.09,-1.30" stroke="#fff" stroke-width="1.30" fill="none" stroke-linecap="round" stroke-linejoin="round"/></svg>
<svg class="abs" style="left:548px;top:453px;" width="20" height="20" viewBox="548 453 20 20"><rect x="550.80" y="455.20" width="14.00" height="14.00" rx="3.50" fill="#f7f5ff"/></svg><svg class="abs" style="left:552.8px;top:457.20px" width="11" height="11" viewBox="0 0 11 11"><g fill="none" stroke="#7c3aed" stroke-width="1.25"><path d="M9.5,4.4 A4.5,4.5 0 1,0 4.4,9.5"/><path d="M7.4,4.5 A2.4,2.4 0 1,0 4.5,7.4"/></g><path d="M5.6,5.6 L10,7.2 L8.3,8 L10.3,10 L9.8,10.5 L7.8,8.5 L7.1,10.2Z" fill="#6d28d9"/></svg>
<span id="t65" class="t" style="left:570.60px;top:457.00px;font-size:11.2px;color:#4b5563;font-weight:400;letter-spacing:0.237px;">mixed origin (Relaunch) (Relaunch)</span>
<svg class="abs" style="left:764px;top:454px;" width="46" height="19" viewBox="764 454 46 19"><rect x="766.00" y="456.00" width="39.10" height="12.80" rx="6.40" fill="#e8eaee"/></svg><svg class="abs" style="left:771.90px;top:457.80px" width="10" height="10" viewBox="-5 -5 10 10"><path d="M-1.12,-3.32 L-0.96,-4.50 L0.96,-4.50 L1.12,-3.32 L2.31,-2.63 L3.42,-3.08 L4.37,-1.42 L3.43,-0.69 L3.43,0.69 L4.37,1.42 L3.42,3.08 L2.31,2.63 L1.12,3.32 L0.96,4.50 L-0.96,4.50 L-1.12,3.32 L-2.31,2.63 L-3.42,3.08 L-4.37,1.42 L-3.43,0.69 L-3.43,-0.69 L-4.37,-1.42 L-3.42,-3.08 L-2.31,-2.63Z M-1.60,0.00 a1.6,1.6 0 1,0 3.2,0 a1.6,1.6 0 1,0 -3.2,0Z" fill="#4b5563" fill-rule="evenodd" stroke="#4b5563" stroke-width="0.4" stroke-linejoin="round"/></svg><span id="t66" class="t" style="left:785.10px;top:458.00px;font-size:9px;color:#4b5563;font-weight:400;letter-spacing:-0.039px;">test</span>
<svg class="abs" style="left:941px;top:454px;opacity:0.42;" width="35" height="17" viewBox="941 454 35 17"><rect x="943.80" y="456.70" width="28.10" height="10.90" rx="5.45" fill="#a7f3d0"/></svg><span id="t67" class="t" style="left:955.40px;top:458.00px;font-size:8.8px;color:#059669;font-weight:700;letter-spacing:0.000px;-webkit-text-stroke:0;opacity:.22;">0</span><svg class="abs" style="left:972px;top:454px;opacity:0.42;" width="35" height="17" viewBox="972 454 35 17"><rect x="974.60" y="456.70" width="28.10" height="10.90" rx="5.45" fill="#fecaca"/></svg><span id="t68" class="t" style="left:986.20px;top:458.00px;font-size:8.8px;color:#ef4444;font-weight:700;letter-spacing:0.000px;-webkit-text-stroke:0;opacity:.22;">0</span><svg class="abs" style="left:1003px;top:454px;opacity:0.42;" width="35" height="17" viewBox="1003 454 35 17"><rect x="1005.80" y="456.70" width="28.10" height="10.90" rx="5.45" fill="#fde68a"/></svg><span id="t69" class="t" style="left:1017.40px;top:458.00px;font-size:8.8px;color:#f59e0b;font-weight:700;letter-spacing:0.000px;-webkit-text-stroke:0;opacity:.22;">0</span>
<svg class="abs" style="left:1091.00px;top:454.90px" width="16" height="16" viewBox="-8 -8 16 16"><circle r="7.1" fill="#161616"/><path d="M-4.3,-4.2 h6.7 v8.8 h-3.1 v-6 h-3.6z" fill="#fff"/><path d="M2.9,-4.2 h1.3 v3.2 h-1.3z" fill="#4f74e0"/></svg>
<span id="t70" class="t" style="left:1143.80px;top:458.00px;font-size:9px;color:#6b7280;font-weight:400;letter-spacing:0.002px;">Jun 23, 2025 5:54 PM</span>
<svg class="abs" style="left:1235px;top:450px;" width="27" height="25" viewBox="1235 450 27 25"><rect x="1237.50" y="453.20" width="19.30" height="17.80" rx="4.50" fill="#fafafa" stroke="#e7e7e9" stroke-width="1"/></svg><svg class="abs" style="left:1242px;top:460.20px" width="11" height="4" viewBox="0 0 11 4"><circle cx="2.1" cy="2" r="0.95" fill="#333"/><circle cx="5.3" cy="2" r="0.95" fill="#333"/><circle cx="8.5" cy="2" r="0.95" fill="#333"/></svg>
</li>
<li>
<svg class="abs" style="left:535.95px;top:488.35px" width="9.70" height="9.70" viewBox="-4.85 -4.85 9.7 9.7"><circle r="4.35" fill="#ef4444"/><rect x="-2.26" y="-0.74" width="4.52" height="1.48" rx="0.43" fill="#fff"/></svg>
<svg class="abs" style="left:548px;top:484px;" width="20" height="20" viewBox="548 484 20 20"><rect x="550.80" y="486.30" width="14.00" height="14.00" rx="3.50" fill="#f7f5ff"/></svg><svg class="abs" style="left:552.8px;top:488.30px" width="11" height="11" viewBox="0 0 11 11"><g fill="none" stroke="#7c3aed" stroke-width="1.25"><path d="M9.5,4.4 A4.5,4.5 0 1,0 4.4,9.5"/><path d="M7.4,4.5 A2.4,2.4 0 1,0 4.5,7.4"/></g><path d="M5.6,5.6 L10,7.2 L8.3,8 L10.3,10 L9.8,10.5 L7.8,8.5 L7.1,10.2Z" fill="#6d28d9"/></svg>
<span id="t71" class="t" style="left:570.60px;top:488.00px;font-size:11.2px;color:#4b5563;font-weight:400;letter-spacing:0.284px;">Mixed origin (Relaunch)</span>
<svg class="abs" style="left:704px;top:485px;" width="46" height="19" viewBox="704 485 46 19"><rect x="706.50" y="487.10" width="39.10" height="12.80" rx="6.40" fill="#e8eaee"/></svg><svg class="abs" style="left:712.40px;top:488.90px" width="10" height="10" viewBox="-5 -5 10 10"><path d="M-1.12,-3.32 L-0.96,-4.50 L0.96,-4.50 L1.12,-3.32 L2.31,-2.63 L3.42,-3.08 L4.37,-1.42 L3.43,-0.69 L3.43,0.69 L4.37,1.42 L3.42,3.08 L2.31,2.63 L1.12,3.32 L0.96,4.50 L-0.96,4.50 L-1.12,3.32 L-2.31,2.63 L-3.42,3.08 L-4.37,1.42 L-3.43,0.69 L-3.43,-0.69 L-4.37,-1.42 L-3.42,-3.08 L-2.31,-2.63Z M-1.60,0.00 a1.6,1.6 0 1,0 3.2,0 a1.6,1.6 0 1,0 -3.2,0Z" fill="#4b5563" fill-rule="evenodd" stroke="#4b5563" stroke-width="0.4" stroke-linejoin="round"/></svg><span id="t72" class="t" style="left:725.60px;top:490.00px;font-size:9px;color:#4b5563;font-weight:400;letter-spacing:-0.039px;">test</span>
<span id="t73" class="t" style="left:752.20px;top:490.00px;font-size:9px;color:#6b7280;font-weight:400;letter-spacing:-0.003px;">4 tests</span>
<svg class="abs" style="left:941px;top:485px;" width="35" height="17" viewBox="941 485 35 17"><rect x="943.80" y="487.80" width="28.10" height="10.90" rx="5.45" fill="#a7f3d0"/></svg><span id="t74" class="t" style="left:955.40px;top:489.00px;font-size:8.8px;color:#059669;font-weight:700;letter-spacing:0.000px;-webkit-text-stroke:0;">2</span><svg class="abs" style="left:972px;top:485px;" width="35" height="17" viewBox="972 485 35 17"><rect x="974.60" y="487.80" width="28.10" height="10.90" rx="5.45" fill="#fecaca"/></svg><span id="t75" class="t" style="left:986.20px;top:489.00px;font-size:8.8px;color:#ef4444;font-weight:700;letter-spacing:0.000px;-webkit-text-stroke:0;">2</span><svg class="abs" style="left:1003px;top:485px;opacity:0.42;" width="35" height="17" viewBox="1003 485 35 17"><rect x="1005.80" y="487.80" width="28.10" height="10.90" rx="5.45" fill="#fde68a"/></svg><span id="t76" class="t" style="left:1017.40px;top:489.00px;font-size:8.8px;color:#f59e0b;font-weight:700;letter-spacing:0.000px;-webkit-text-stroke:0;opacity:.22;">0</span>
<svg class="abs" style="left:1091.00px;top:486.00px" width="16" height="16" viewBox="-8 -8 16 16"><circle r="7.1" fill="#161616"/><path d="M-4.3,-4.2 h6.7 v8.8 h-3.1 v-6 h-3.6z" fill="#fff"/><path d="M2.9,-4.2 h1.3 v3.2 h-1.3z" fill="#4f74e0"/></svg>
<span id="t77" class="t" style="left:1143.80px;top:489.00px;font-size:9px;color:#6b7280;font-weight:400;letter-spacing:0.002px;">Jun 23, 2025 4:58 PM</span>
<svg class="abs" style="left:1235px;top:481px;" width="27" height="25" viewBox="1235 481 27 25"><rect x="1237.50" y="484.30" width="19.30" height="17.80" rx="4.50" fill="#fafafa" stroke="#e7e7e9" stroke-width="1"/></svg><svg class="abs" style="left:1242px;top:491.30px" width="11" height="4" viewBox="0 0 11 4"><circle cx="2.1" cy="2" r="0.95" fill="#333"/><circle cx="5.3" cy="2" r="0.95" fill="#333"/><circle cx="8.5" cy="2" r="0.95" fill="#333"/></svg>
</li>
<li>
<svg class="abs" style="left:535.95px;top:519.45px" width="9.70" height="9.70" viewBox="-4.85 -4.85 9.7 9.7"><circle r="4.35" fill="#10b981"/><path d="M-1.96,0.22 L-0.52,1.65 L2.09,-1.30" stroke="#fff" stroke-width="1.30" fill="none" stroke-linecap="round" stroke-linejoin="round"/></svg>
<svg class="abs" style="left:548px;top:515px;" width="20" height="20" viewBox="548 515 20 20"><rect x="550.80" y="517.40" width="14.00" height="14.00" rx="3.50" fill="#fef3c7"/></svg><svg class="abs" style="left:552.8px;top:519.40px" width="11" height="11" viewBox="0 0 11 11"><path d="M4.9,4.9 L10,6.7 L8,7.6 L10.2,9.8 L9.6,10.4 L7.4,8.2 L6.6,10.2Z" fill="#b45309"/><g stroke="#b45309" stroke-width="1" stroke-linecap="butt"><path d="M5,0.8 v1.6 M1.9,2 l1.2,1.2 M0.6,5.2 h1.7 M2,8.3 l1.1,-1.1 M8.1,2 l-1.1,1.2"/></g></svg>
<div class="abs" style="left:570.6px;top:516.4px;width:365.6px;height:18px;overflow:hidden"><span id="t78" class="t" style="left:0.00px;top:3.00px;font-size:11.2px;color:#4b5563;font-weight:400;letter-spacing:0.000px;white-space:nowrap;letter-spacing:0.64px;">veeeerrrrryyyyyyyyyy llooooooooonnnnngggggggggg tttteeeexxxxxxtttt</span></div>
<svg class="abs" style="left:941px;top:516px;" width="35" height="17" viewBox="941 516 35 17"><rect x="943.80" y="518.90" width="28.10" height="10.90" rx="5.45" fill="#a7f3d0"/></svg><span id="t79" class="t" style="left:955.40px;top:521.00px;font-size:8.8px;color:#059669;font-weight:700;letter-spacing:0.000px;-webkit-text-stroke:0;">5</span><svg class="abs" style="left:972px;top:516px;opacity:0.42;" width="35" height="17" viewBox="972 516 35 17"><rect x="974.60" y="518.90" width="28.10" height="10.90" rx="5.45" fill="#fecaca"/></svg><span id="t80" class="t" style="left:986.20px;top:521.00px;font-size:8.8px;color:#ef4444;font-weight:700;letter-spacing:0.000px;-webkit-text-stroke:0;opacity:.22;">0</span><svg class="abs" style="left:1003px;top:516px;opacity:0.42;" width="35" height="17" viewBox="1003 516 35 17"><rect x="1005.80" y="518.90" width="28.10" height="10.90" rx="5.45" fill="#fde68a"/></svg><span id="t81" class="t" style="left:1017.40px;top:521.00px;font-size:8.8px;color:#f59e0b;font-weight:700;letter-spacing:0.000px;-webkit-text-stroke:0;opacity:.22;">0</span>
<svg class="abs" style="left:1091.00px;top:517.10px" width="16" height="16" viewBox="-8 -8 16 16"><circle r="7.1" fill="#161616"/><path d="M-4.3,-4.2 h6.7 v8.8 h-3.1 v-6 h-3.6z" fill="#fff"/><path d="M2.9,-4.2 h1.3 v3.2 h-1.3z" fill="#4f74e0"/></svg>
<span id="t82" class="t" style="left:1140.80px;top:520.00px;font-size:9px;color:#6b7280;font-weight:400;letter-spacing:-0.165px;">May 15, 2025 11:49 AM</span>
<svg class="abs" style="left:1235px;top:512px;" width="27" height="25" viewBox="1235 512 27 25"><rect x="1237.50" y="515.40" width="19.30" height="17.80" rx="4.50" fill="#fafafa" stroke="#e7e7e9" stroke-width="1"/></svg><svg class="abs" style="left:1242px;top:522.40px" width="11" height="4" viewBox="0 0 11 4"><circle cx="2.1" cy="2" r="0.95" fill="#333"/><circle cx="5.3" cy="2" r="0.95" fill="#333"/><circle cx="8.5" cy="2" r="0.95" fill="#333"/></svg>
</li>
</ul>
</section>
</div>
</body></html>
